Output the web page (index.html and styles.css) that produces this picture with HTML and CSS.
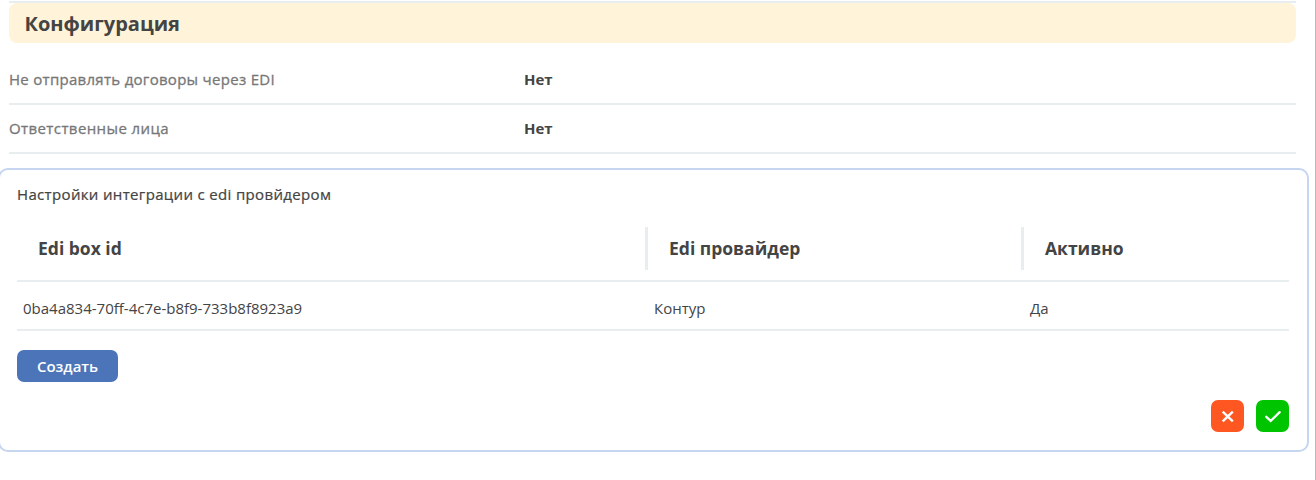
FILE: index.html
```html
<!DOCTYPE html>
<html lang="ru">
<head>
<meta charset="utf-8">
<title>Конфигурация</title>
<link rel="stylesheet" href="styles.css">
</head>
<body>
<main class="page">
  <section class="config">
    <h2 class="config-title">Конфигурация</h2>
    <div class="field"><span class="field-label">Не отправлять договоры через EDI</span><span class="field-value">Нет</span></div>
    <div class="field"><span class="field-label wide">Ответственные лица</span><span class="field-value">Нет</span></div>
  </section>
  <section class="card">
    <h3 class="card-title">Настройки интеграции с edi провйдером</h3>
    <div class="row head">
      <div class="th">Edi box id</div>
      <div class="th">Edi провайдер</div>
      <div class="th">Активно</div>
    </div>
    <div class="row data">
      <div class="td">0ba4a834-70ff-4c7e-b8f9-733b8f8923a9</div>
      <div class="td">Контур</div>
      <div class="td">Да</div>
    </div>
    <button class="create">Создать</button>
    <div class="actions">
      <button class="icon-btn cancel" aria-label="Отмена"><svg width="33" height="32" viewBox="0 0 33 32"><path d="M11.7 11.7L21.8 21.3M21.8 11.7L11.7 21.3"/></svg></button>
      <button class="icon-btn confirm" aria-label="Сохранить"><svg width="33" height="32" viewBox="0 0 33 32"><path d="M10.3 16.8L14.7 20.9L23.7 12.2"/></svg></button>
    </div>
  </section>
</main>
</body>
</html>
```
FILE: styles.css
```css
* { box-sizing: border-box; }
body { margin: 0; background: #fff; font-family: "Open Sans", "Noto Sans", sans-serif; font-size: 15px; color: #444; overflow: hidden; }
.page { height: 480px; border-right: 1px solid #b8b8b8; padding-top: 1px; }
.config { margin: 0 19px 0 9px; border-top: 2px solid #e8edf0; }
.config-title { margin: 0 0 12px; height: 40px; padding-left: 15.5px; border-radius: 8px; background: #fff4d9; font-size: 20px; line-height: 41px; font-weight: 700; }
.field { display: grid; grid-template-columns: 515px 1fr; height: 49px; border-bottom: 2px solid #e8edf0; line-height: 47px; }
.field:first-of-type { height: 50px; line-height: 49px; }
.field-label { color: #777; letter-spacing: 0.29px; -webkit-text-stroke: 0.3px #777; }
.field-label.wide { letter-spacing: 0.4px; }
.field-value { font-weight: 700; }
.card { margin: 14px 6px 0 -2px; height: 284px; border: 2px solid #c6d5f0; border-radius: 10px; padding: 14px 18px 0 17px; }
.card-title { margin: 0; font-size: 15px; font-weight: 400; line-height: 21px; letter-spacing: 0.34px; -webkit-text-stroke: 0.22px #444; }
.row { display: grid; grid-template-columns: 631px 376px 1fr; border-bottom: 2px solid #e8edf0; }
.head { margin-top: 22px; height: 55px; }
.th { height: 43px; padding-left: 21px; font-size: 17.5px; font-weight: 700; line-height: 43px; }
.th + .th { border-left: 3px solid #e8edf0; margin-left: -3px; }
.data { height: 49px; }
.td { padding-left: 6px; line-height: 53px; height: 47px; }
.create, .icon-btn { display: block; border: 0; padding: 0; border-radius: 7px; color: #fff; font-family: inherit; }
.create { width: 101px; height: 32px; margin-top: 19px; background: #4b75b8; font-size: 15px; font-weight: 600; line-height: 32px; }
.actions { display: flex; justify-content: flex-end; gap: 12px; margin-top: 18px; }
.icon-btn { width: 33px; height: 32px; }
.icon-btn svg { display: block; fill: none; stroke: #fff; stroke-width: 2.4; }
.cancel { background: #ff5722; }
.confirm { background: #00c400; }
.confirm svg { stroke-width: 2.3; stroke-linecap: round; }
```
